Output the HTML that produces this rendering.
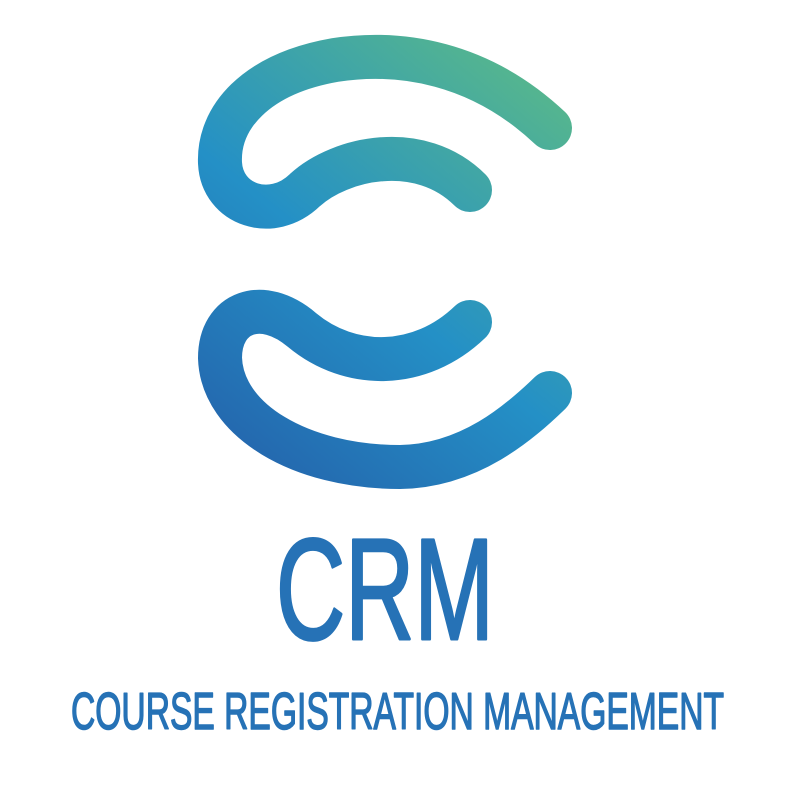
<!DOCTYPE html>
<html><head><meta charset="utf-8"><style>
html,body{margin:0;padding:0;background:#fff;width:800px;height:800px;overflow:hidden}
</style></head><body>
<svg width="800" height="800" viewBox="0 0 800 800" xmlns="http://www.w3.org/2000/svg">
<defs>
<linearGradient id="g" gradientUnits="userSpaceOnUse" x1="560" y1="60" x2="230" y2="480">
<stop offset="0" stop-color="#5bba88"/>
<stop offset="0.55" stop-color="#2490c6"/>
<stop offset="1" stop-color="#2462ab"/>
</linearGradient>
</defs>
<g fill="none" stroke="url(#g)" stroke-width="44" stroke-linecap="round" stroke-linejoin="round">
<path d="M550,128 C480,62 400,50 335,60 C255,74 218,118 220,163 C222,205 272,222 305,190 C340,158 420,140 470,190"/>
<path d="M470,322 C420,370 350,370 302,330 C262,296 220,312 220,358 C222,420 300,467 400,467 C470,466 520,422 550,393"/>
</g>
<g fill="#2672b6" stroke="#2672b6" stroke-linejoin="round" font-family="Liberation Sans, sans-serif">
<text x="276" y="639" font-size="144" stroke-width="3" textLength="218" lengthAdjust="spacingAndGlyphs">CRM</text>
<text x="71" y="729" font-size="52" stroke-width="1.5" textLength="653" lengthAdjust="spacingAndGlyphs">COURSE REGISTRATION MANAGEMENT</text>
</g>
</svg>
</body></html>
